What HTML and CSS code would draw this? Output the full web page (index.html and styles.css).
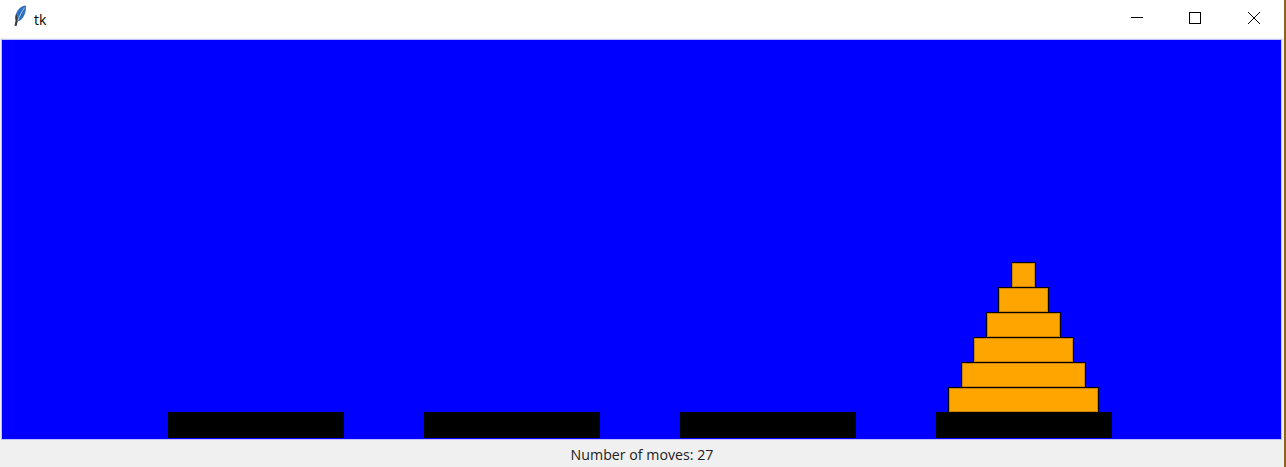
FILE: index.html

```html
<!DOCTYPE html>
<html lang="en">
<head>
  <meta charset="UTF-8" />
  <title>tk</title>
  <link rel="stylesheet" href="styles.css">
</head>
<body>
  <div class="window">
    <div class="titlebar">
      <svg class="feather" width="14" height="22" viewBox="0 0 14 22">
        <path d="M12.8 .5 C8.5 1 4.5 4 3 9 C2.2 12 2.2 14 2.8 15.5 L1.6 20.5 L3.4 21 L4.6 16.5 C8.6 15.5 11.6 11.5 12.6 6 C13 4 13.2 2 12.8 .5 Z" fill="#2f6fc0"/>
        <path d="M11.8 2.5 C9 6 6.5 11 4.4 16.5" fill="none" stroke="#a9c6ea" stroke-width="1"/>
        <path d="M3 9 C2.2 12 2.2 14 2.8 15.5 L1.6 20.5 L3.4 21 L4.6 16.5 L4 11 Z" fill="#3a3a3a"/>
      </svg>
      <span class="title">tk</span>
      <div class="controls">
        <svg width="58" height="36" viewBox="0 0 58 36"><path d="M23 16.5 H35" stroke="#000" fill="none"/></svg>
        <svg width="58" height="36" viewBox="0 0 58 36"><rect x="23.5" y="11.5" width="11" height="11" stroke="#000" fill="none"/></svg>
        <svg width="58" height="36" viewBox="0 0 58 36"><path d="M24 11 L36 23 M36 11 L24 23" stroke="#000" fill="none"/></svg>
      </div>
    </div>
    <div class="canvas">
      <div class="peg"><div class="base"></div></div>
      <div class="peg"><div class="base"></div></div>
      <div class="peg"><div class="base"></div></div>
      <div class="peg">
        <div class="disk disk-1"></div>
        <div class="disk disk-2"></div>
        <div class="disk disk-3"></div>
        <div class="disk disk-4"></div>
        <div class="disk disk-5"></div>
        <div class="disk disk-6"></div>
        <div class="base"></div>
      </div>
    </div>
    <div class="status">Number of moves: 27</div>
  </div>
</body>
</html>
```

FILE: styles.css

```css
html, body {
  margin: 0;
  height: 100%;
  overflow: hidden;
}
body {
  background: #fff;
  font-family: "Open Sans", "Noto Sans", sans-serif;
}
.window {
  width: 1286px;
  height: 467px;
  display: flex;
  flex-direction: column;
  box-sizing: border-box;
  background: #f0f0f0;
  border-right: 2px solid #8a6420;
}
.titlebar {
  height: 38px;
  flex: none;
  background: #fff;
  display: flex;
  align-items: center;
  padding-left: 13px;
  padding-right: 2px;
}
.feather {
  margin: 0 7px 6px 0;
}
.title {
  font-size: 14px;
  color: #000;
}
.controls {
  margin-left: auto;
  display: flex;
}
.canvas {
  margin: 1px 0 0 1px;
  width: 1281px;
  height: 401px;
  flex: none;
  box-sizing: border-box;
  background: #0000ff;
  border: 1px solid #c0c0fa;
  display: flex;
  align-items: flex-end;
  gap: 80px;
  padding: 0 0 1px 166px;
}
.peg {
  width: 176px;
  display: flex;
  flex-direction: column;
  align-items: center;
}
.base {
  width: 176px;
  height: 26px;
  background: #000;
}
.disk {
  height: 26px;
  margin: 0 1px -1px 0;
  box-sizing: border-box;
  background: #ffa500;
  border: 1px solid #000;
  box-shadow: inset 0 0 0 1px rgba(0, 0, 0, 0.2);
}
.disk-1 { width: 25px; }
.disk-2 { width: 51px; }
.disk-3 { width: 75px; }
.disk-4 { width: 101px; }
.disk-5 { width: 125px; }
.disk-6 { width: 151px; }
.status {
  height: 27px;
  line-height: 30px;
  text-align: center;
  font-size: 14.2px;
  color: #222;
}
```
